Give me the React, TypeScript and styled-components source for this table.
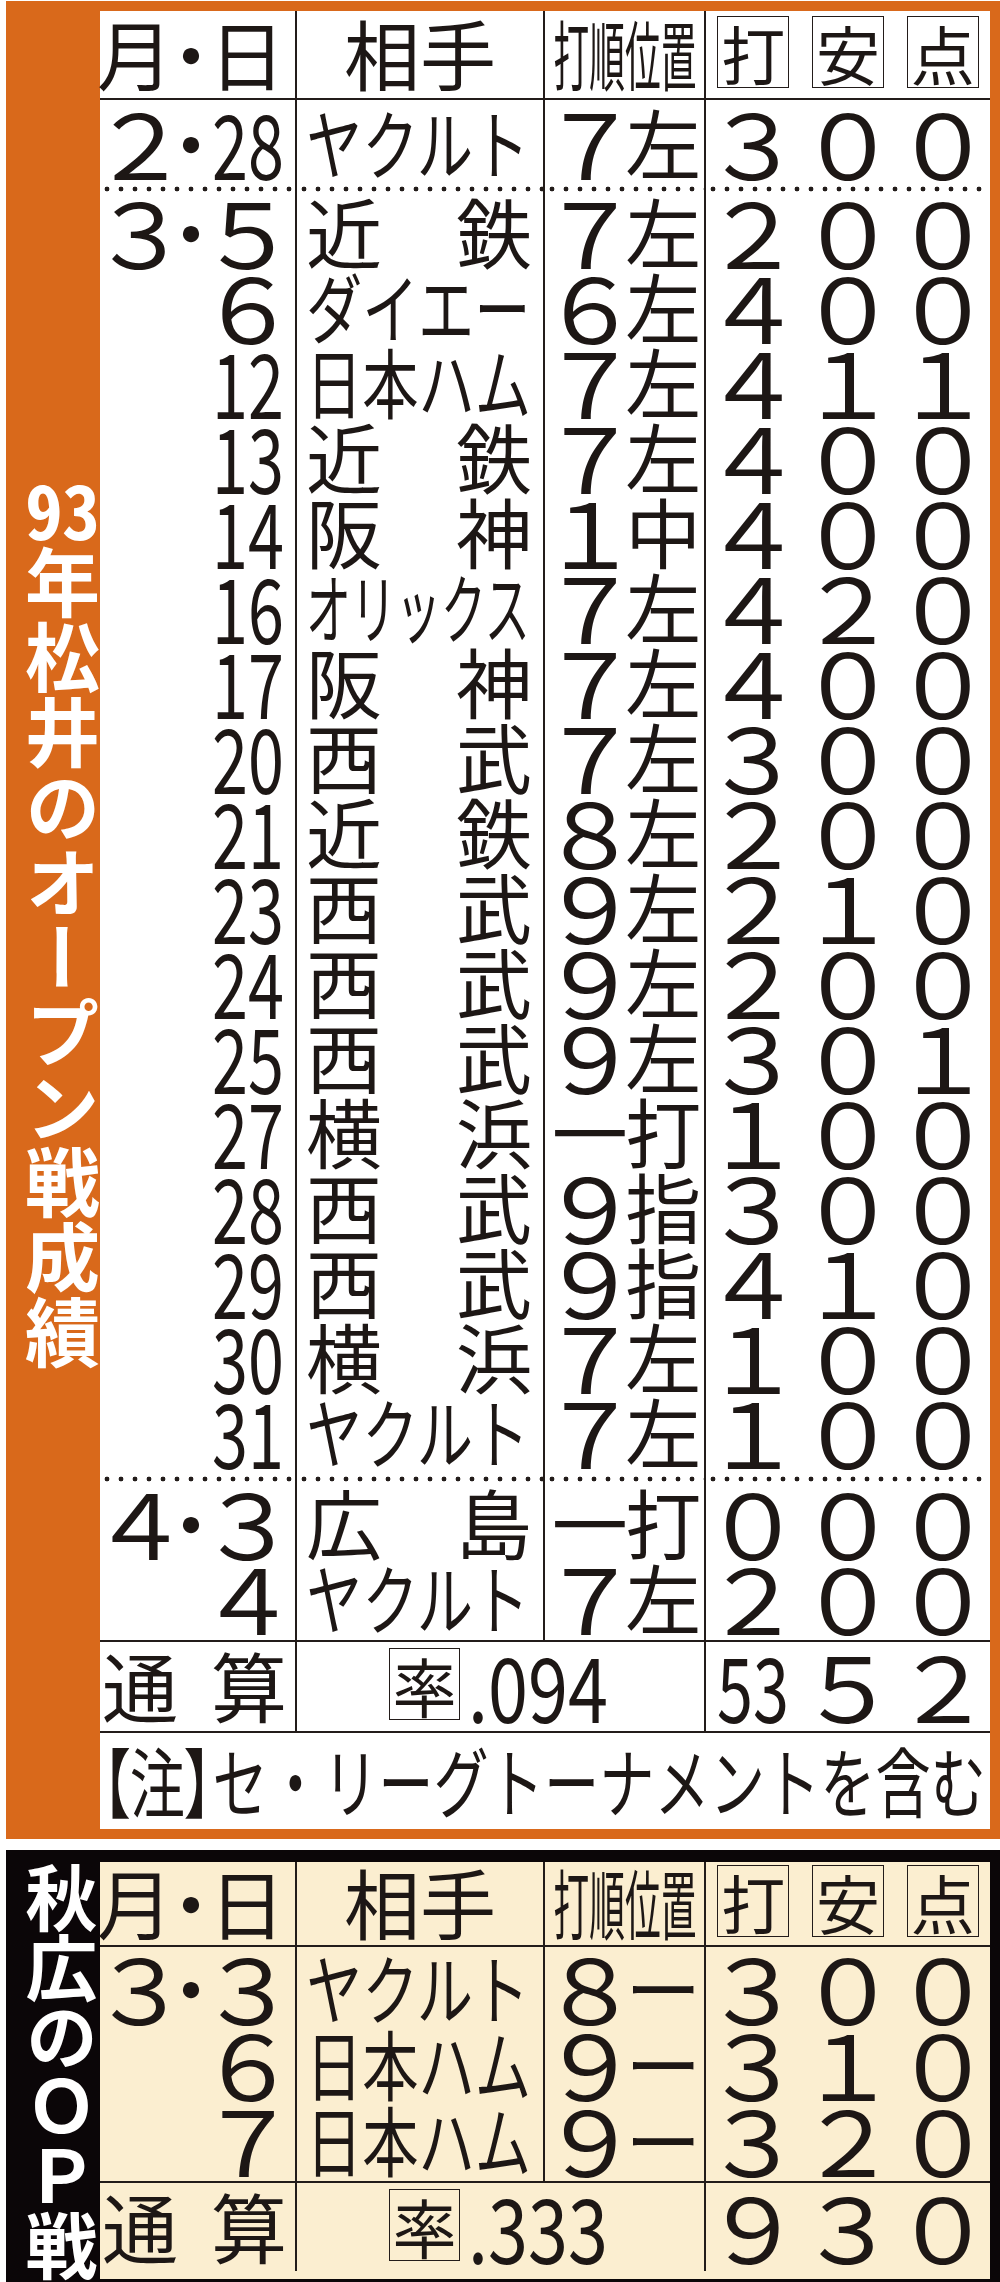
import React from "react";
import styled, { createGlobalStyle } from "styled-components";

const INK = "#1d1715";
const LINE = "#231c1a";
const ORANGE = "#d9691b";
const CREAM = "#fbeed0";
const DARK = "#0b0608";
const FONT = `"Noto Sans CJK JP", "Noto Sans", sans-serif`;

const GlobalStyle = createGlobalStyle`
  html, body { margin: 0; padding: 0; background: #fff; }
  body { font-family: ${FONT}; color: ${INK}; }
`;

const toFull = (s: string) =>
  s.replace(/[0-9]/g, (c) => String.fromCharCode(c.charCodeAt(0) + 0xfee0));

/* ---------- page / panels ---------- */
const Page = styled.div`
  width: 1000px;
  padding-top: 1px;
  display: flex;
  flex-direction: column;
  gap: 11px;
`;

const Panel = styled.section<{ $bg: string; $pt: number; $pb: number }>`
  display: flex;
  margin-left: 6px;
  width: 994px;
  box-sizing: border-box;
  background: ${(p) => p.$bg};
  padding: ${(p) => p.$pt}px 10px ${(p) => p.$pb}px 0;
`;

const Side = styled.div<{ $pr: number }>`
  width: 94px;
  flex: none;
  box-sizing: border-box;
  display: flex;
  align-items: center;
  justify-content: flex-end;
  padding-right: ${(p) => p.$pr}px;
`;

const SideTitle = styled.h2<{ $size: number; $ls: number }>`
  margin: 0;
  writing-mode: vertical-rl;
  font-family: ${FONT};
  font-size: ${(p) => p.$size}px;
  line-height: 1;
  letter-spacing: ${(p) => p.$ls}px;
  font-weight: 700;
  color: #fff;
  white-space: nowrap;
`;

const Tcy = styled.span`
  text-combine-upright: all;
`;

const Table = styled.div<{ $bg: string }>`
  width: 890px;
  flex: none;
  background: ${(p) => p.$bg};
  display: flex;
  flex-direction: column;
`;

/* ---------- rows & cells ---------- */
const Row = styled.div<{ $h: number; $pt?: number; $pb?: number; $line?: boolean }>`
  display: grid;
  grid-template-columns: 195px 248px 161px 286px;
  grid-template-rows: minmax(0, 1fr);
  height: ${(p) => p.$h}px;
  box-sizing: border-box;
  border-bottom: ${(p) => (p.$line ? `2px solid ${LINE}` : "none")};
  & > * {
    padding-top: ${(p) => p.$pt ?? 0}px;
    padding-bottom: ${(p) => (p.$pb ?? 0) + 5}px;
  }
`;

const DotRow = styled.div`
  display: grid;
  grid-template-columns: 195px 248px 161px 286px;
  height: 6px;
`;

const Cell = styled.div<{ $span?: number }>`
  box-sizing: border-box;
  display: flex;
  align-items: center;
  min-width: 0;
  min-height: 0;
  border-left: 2px solid ${LINE};
  grid-column: span ${(p) => p.$span ?? 1};
  &:first-child {
    border-left: none;
  }
`;

const DotCell = styled(Cell)`
  background-image: radial-gradient(circle at center, ${LINE} 2.1px, transparent 2.7px);
  background-size: 14px 6px;
  background-repeat: repeat-x;
`;

const DateCell = styled(Cell)`
  padding-right: 2px;
`;

const DayBox = styled.div`
  flex: 1;
  min-width: 0;
  display: flex;
  justify-content: flex-end;
  align-items: center;
`;

const TeamCell = styled(Cell)<{ $spread?: boolean }>`
  padding-left: 9px;
  padding-right: 11px;
  justify-content: ${(p) => (p.$spread ? "space-between" : "flex-start")};
`;

const CenterCell = styled(Cell)`
  justify-content: center;
`;

const PosCell = styled(Cell)`
  display: grid;
  grid-template-columns: minmax(0, 1fr) minmax(0, 1fr);
  grid-template-rows: minmax(0, 1fr);
  align-items: center;
  padding-left: 8px;
  padding-right: 4px;
`;

const StatCell = styled(Cell)`
  display: grid;
  grid-template-columns: repeat(3, minmax(0, 1fr));
  grid-template-rows: minmax(0, 1fr);
  align-items: center;
`;

const SumCell = styled(Cell)`
  justify-content: space-between;
  padding-left: 2px;
  padding-right: 8px;
`;

const RateCell = styled(Cell)`
  padding-left: 92px;
`;

const NoteCell = styled(Cell)``;

const Slot = styled.div<{ $w?: number }>`
  display: flex;
  justify-content: center;
  align-items: center;
  min-width: 0;
  min-height: 0;
  height: 100%;
  ${(p) => (p.$w ? `width: ${p.$w}px; flex: none;` : "")}
`;

/* ---------- text ---------- */
const Kan = styled.span<{ $size?: number }>`
  display: inline-block;
  flex: none;
  font-size: ${(p) => p.$size ?? 76}px;
  line-height: 1;
  white-space: nowrap;
`;

/* full-width digits, widened a little like the newspaper face */
const Wide = styled.span`
  display: inline-block;
  flex: none;
  font-size: 90px;
  line-height: 1;
  white-space: nowrap;
  transform: scaleX(1.1);
`;

const Fit = styled.span<{
  $sx: number;
  $o?: string;
  $size?: number;
  $ml?: number;
  $mr?: number;
}>`
  display: inline-block;
  flex: none;
  white-space: nowrap;
  line-height: 1;
  font-size: ${(p) => p.$size ?? 76}px;
  transform: scaleX(${(p) => p.$sx});
  transform-origin: ${(p) => p.$o ?? "left"} center;
  margin-left: ${(p) => p.$ml ?? 0}px;
  margin-right: ${(p) => p.$mr ?? 0}px;
`;

const Palt = styled.span`
  font-feature-settings: "palt" 1;
`;

const Boxed = styled.span<{ $w: number }>`
  box-sizing: border-box;
  flex: none;
  width: ${(p) => p.$w}px;
  height: 72px;
  border: 1.6px solid ${LINE};
  display: flex;
  align-items: center;
  justify-content: center;
  font-size: 64px;
  line-height: 1;
`;

/* ---------- data ---------- */
type Game = {
  m?: string;
  d: string;
  team: string;
  pos: [string, string];
  s: [string, string, string];
};

const g = (m: string, d: string, team: string, pos: string, s: string): Game => ({
  m: m || undefined,
  d,
  team,
  pos: [pos[0], pos[1]],
  s: [s[0], s[1], s[2]],
});

const first: Game[] = [g("2", "28", "ヤクルト", "7左", "300")];

const march: Game[] = [
  g("3", "5", "近鉄", "7左", "200"),
  g("", "6", "ダイエー", "6左", "400"),
  g("", "12", "日本ハム", "7左", "411"),
  g("", "13", "近鉄", "7左", "400"),
  g("", "14", "阪神", "1中", "400"),
  g("", "16", "オリックス", "7左", "420"),
  g("", "17", "阪神", "7左", "400"),
  g("", "20", "西武", "7左", "300"),
  g("", "21", "近鉄", "8左", "200"),
  g("", "23", "西武", "9左", "210"),
  g("", "24", "西武", "9左", "200"),
  g("", "25", "西武", "9左", "301"),
  g("", "27", "横浜", "一打", "100"),
  g("", "28", "西武", "9指", "300"),
  g("", "29", "西武", "9指", "410"),
  g("", "30", "横浜", "7左", "100"),
  g("", "31", "ヤクルト", "7左", "100"),
];

const april: Game[] = [
  g("4", "3", "広島", "一打", "000"),
  g("", "4", "ヤクルト", "7左", "200"),
];

const akihiro: Game[] = [
  g("3", "3", "ヤクルト", "8ー", "300"),
  g("", "6", "日本ハム", "9ー", "310"),
  g("", "7", "日本ハム", "9ー", "320"),
];

/* ---------- pieces ---------- */
const isDigit = (c: string) => /[0-9]/.test(c);

function Num({ v, o = "center", mr = 0 }: { v: string; o?: string; mr?: number }) {
  if (v.length === 1) return <Wide>{toFull(v)}</Wide>;
  return (
    <Fit $sx={0.72} $o={o} $size={90} $mr={mr}>
      {v}
    </Fit>
  );
}

function Team({ name }: { name: string }) {
  const chars = Array.from(name);
  if (chars.length === 2)
    return (
      <TeamCell $spread>
        <Kan>{chars[0]}</Kan>
        <Kan>{chars[1]}</Kan>
      </TeamCell>
    );
  return (
    <TeamCell>
      <Fit $sx={225 / (chars.length * 76)}>{name}</Fit>
    </TeamCell>
  );
}

function GameRow({
  game,
  h = 75,
  pt,
  pb,
  line,
}: {
  game: Game;
  h?: number;
  pt?: number;
  pb?: number;
  line?: boolean;
}) {
  return (
    <Row $h={h} $pt={pt} $pb={pb} $line={line}>
      <DateCell>
        <Slot $w={80}>{game.m && <Wide>{toFull(game.m)}</Wide>}</Slot>
        <Slot $w={22}>{game.m && <Kan>・</Kan>}</Slot>
        <DayBox>
          <Num v={game.d} o="right" mr={9} />
        </DayBox>
      </DateCell>
      <Team name={game.team} />
      <PosCell>
        <Slot>{isDigit(game.pos[0]) ? <Wide>{toFull(game.pos[0])}</Wide> : <Kan>{game.pos[0]}</Kan>}</Slot>
        <Slot>
          <Kan>{game.pos[1]}</Kan>
        </Slot>
      </PosCell>
      <StatCell>
        {game.s.map((v, i) => (
          <Slot key={i}>
            <Num v={v} />
          </Slot>
        ))}
      </StatCell>
    </Row>
  );
}

function HeadRow({ h }: { h: number }) {
  return (
    <Row $h={h} $line>
      <DateCell>
        <Slot $w={70}>
          <Kan>月</Kan>
        </Slot>
        <Slot $w={42}>
          <Kan>・</Kan>
        </Slot>
        <Slot $w={70}>
          <Kan>日</Kan>
        </Slot>
      </DateCell>
      <CenterCell>
        <Kan>相手</Kan>
      </CenterCell>
      <CenterCell>
        <Fit $sx={0.47} $o="center">
          打順位置
        </Fit>
      </CenterCell>
      <StatCell>
        {["打", "安", "点"].map((c) => (
          <Slot key={c}>
            <Boxed $w={72}>{c}</Boxed>
          </Slot>
        ))}
      </StatCell>
    </Row>
  );
}

function SumRow({ h, rate, s, line }: { h: number; rate: string; s: [string, string, string]; line?: boolean }) {
  return (
    <Row $h={h} $line={line}>
      <SumCell>
        <Kan>通</Kan>
        <Kan>算</Kan>
      </SumCell>
      <RateCell $span={2}>
        <Boxed $w={71}>率</Boxed>
        <Fit $sx={0.8} $size={90} $ml={8}>
          {rate}
        </Fit>
      </RateCell>
      <StatCell>
        {s.map((v, i) => (
          <Slot key={i}>
            <Num v={v} />
          </Slot>
        ))}
      </StatCell>
    </Row>
  );
}

function Dots() {
  return (
    <DotRow>
      <DotCell />
      <DotCell />
      <DotCell />
      <DotCell />
    </DotRow>
  );
}

export default function App() {
  return (
    <>
      <GlobalStyle />
      <Page>
        <Panel $bg={ORANGE} $pt={10} $pb={10}>
          <Side $pr={0}>
            <SideTitle $size={75} $ls={0}>
              <Tcy>93</Tcy>年松井のオープン戦成績
            </SideTitle>
          </Side>
          <Table $bg="#ffffff">
            <HeadRow h={89} />
            <GameRow game={first[0]} h={86} />
            <Dots />
            {march.map((m, i) => (
              <GameRow
                key={m.d + m.team + i}
                game={m}
                h={i === 0 ? 78 : i === march.length - 1 ? 81 : 75}
                pt={i === 0 ? 3 : 0}
                pb={i === march.length - 1 ? 6 : 0}
              />
            ))}
            <Dots />
            <GameRow game={april[0]} h={79} pt={4} />
            <GameRow game={april[1]} h={81} pb={4} line />
            <SumRow h={91} rate=".094" s={["53", "5", "2"]} line />
            <Row $h={96}>
              <NoteCell $span={4}>
                <Fit $sx={0.727} $ml={2}>
                  <Palt>【注】</Palt>セ・リーグトーナメントを含む
                </Fit>
              </NoteCell>
            </Row>
          </Table>
        </Panel>
        <Panel $bg={DARK} $pt={12} $pb={9}>
          <Side $pr={3}>
            <SideTitle $size={72} $ls={-2.5}>
              秋広のＯＰ戦
            </SideTitle>
          </Side>
          <Table $bg={CREAM}>
            <HeadRow h={85} />
            {akihiro.map((m, i) => (
              <GameRow
                key={m.d + i}
                game={m}
                h={i === 0 ? 79 : i === 2 ? 81 : 76}
                pt={i === 0 ? 3 : 0}
                pb={i === 2 ? 3 : 0}
                line={i === 2}
              />
            ))}
            <SumRow h={88} rate=".333" s={["9", "3", "0"]} />
          </Table>
        </Panel>
      </Page>
    </>
  );
}
